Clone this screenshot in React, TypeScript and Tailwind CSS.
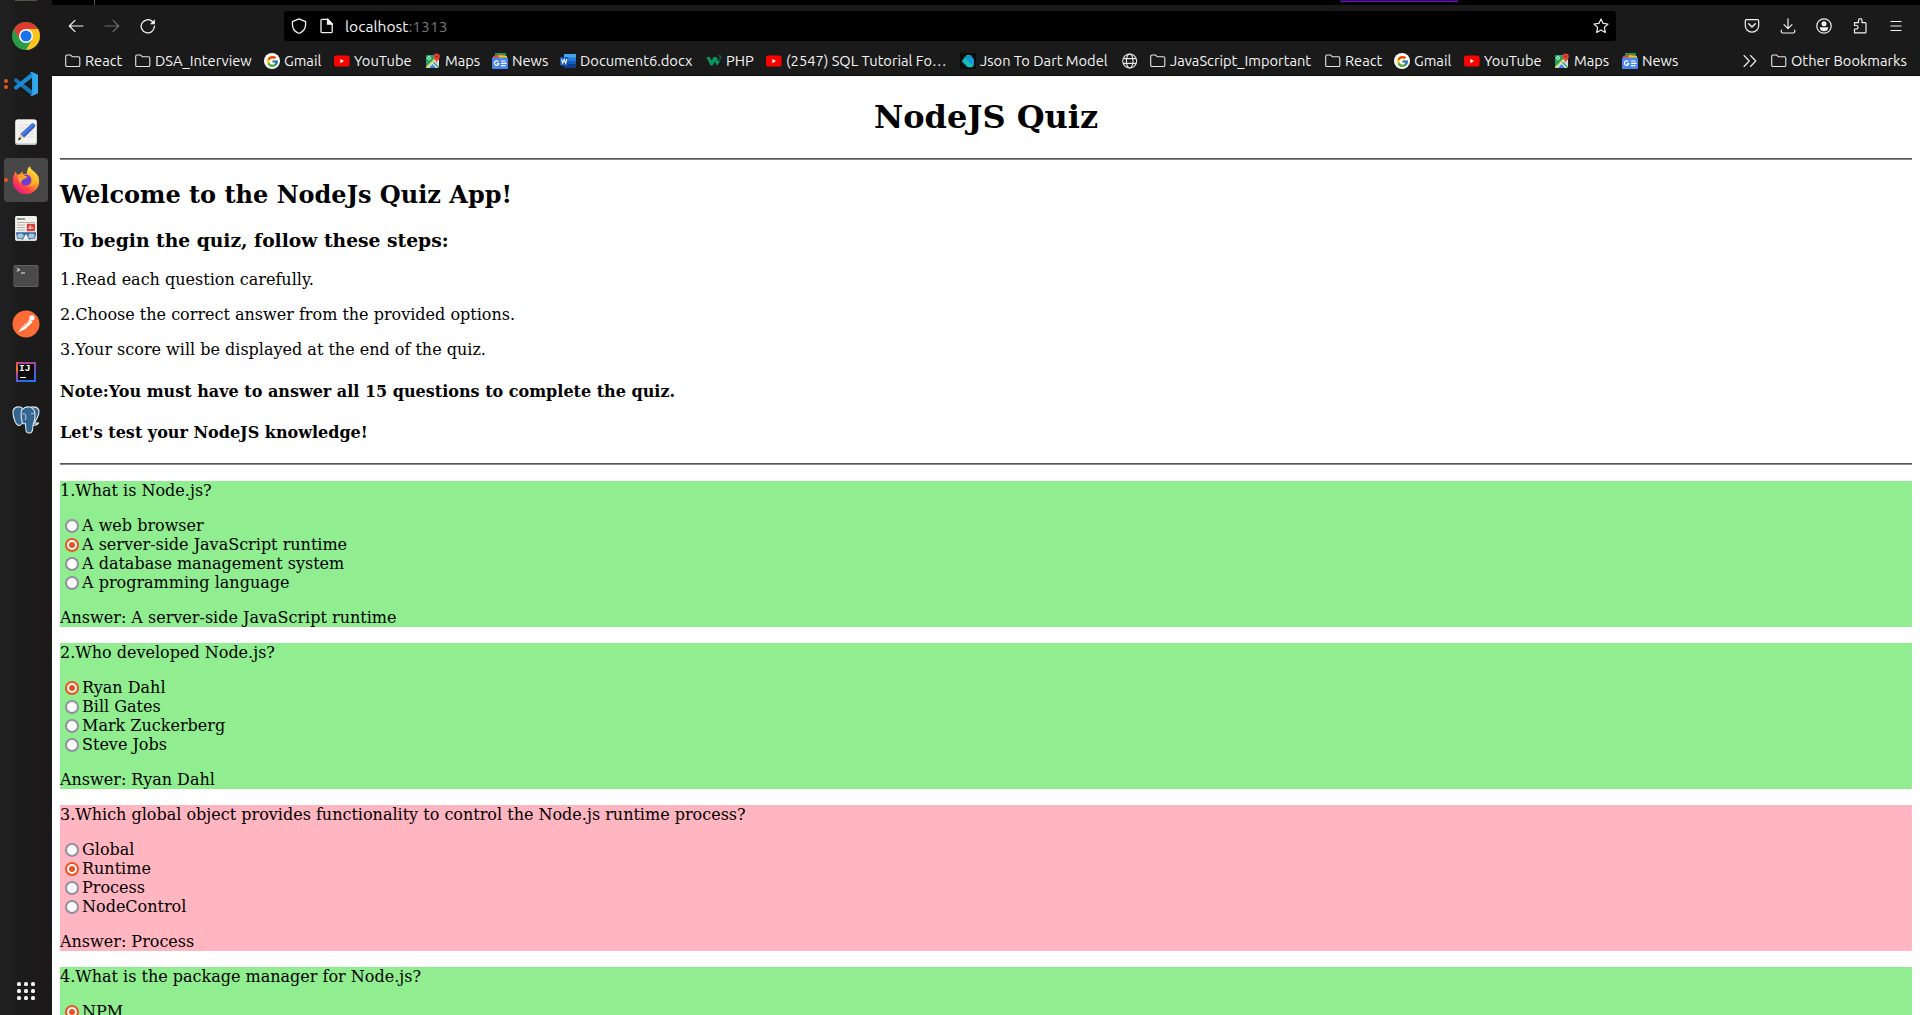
import React from "react";
import { FcGoogle } from "react-icons/fc";

type IconProps = { className?: string };

function FolderIcon() {
  return (
    <svg width="16" height="16" viewBox="0 0 16 16" fill="none" stroke="#e8e8ea" strokeWidth="1.1">
      <path d="M.7 12.2V3.3Q.7 2 2 2h3.6l1.8 1.8h6.1q1.3 0 1.3 1.3v7.1q0 1.3-1.3 1.3H2q-1.3 0-1.3-1.3Z" />
    </svg>
  );
}

function GoogleIcon() {
  return (
    <span className="flex size-4 items-center justify-center rounded-full bg-white">
      <FcGoogle size={13} />
    </span>
  );
}

function YouTubeIcon() {
  return (
    <svg width="16" height="16" viewBox="0 0 16 16">
      <rect x="0" y="2.4" width="15.6" height="11.2" rx="2.6" fill="#f00" />
      <path d="M6.3 5.9v4.3L10 8Z" fill="#fff" />
    </svg>
  );
}

function MapsIcon() {
  return (
    <svg width="16" height="16" viewBox="0 0 16 16">
      <rect x="1" y="2" width="13" height="13" rx="1" fill="#1fa463" />
      <path d="m1 14 9-9 2 1-10 9H1Z" fill="#ffd84d" />
      <path d="M14 7v7L8 8l3-2Z" fill="#d5d9df" />
      <path d="m7.5 9.2 5.6 5.8H2.4Z" fill="#e9eaed" />
      <path d="m4 15 3.5-4 3.4 4Z" fill="#4285f4" />
      <circle cx="4" cy="5" r="1.5" fill="none" stroke="#fff" strokeWidth=".8" />
      <path d="M11.6 10.4C11.5 7.2 8.4 6.5 8.4 3.6a3.2 3.2 0 0 1 6.4 0c0 2.9-3.1 3.6-3.2 6.8Z" fill="#ea4335" />
      <circle cx="11.6" cy="3.5" r="1.1" fill="#89251f" />
    </svg>
  );
}

function NewsIcon() {
  return (
    <svg width="16" height="16" viewBox="0 0 16 16">
      <path d="M3 0h11v6H3Z" fill="#0c9d58" />
      <path d="m1 3 10-2 2 5H1Z" fill="#ea4335" />
      <path d="m7 2 8 1v4H6Z" fill="#ffc107" />
      <rect x="0" y="4.5" width="16" height="11.5" rx="1" fill="#4a86f0" />
      <path d="M6.3 8.7a2.2 2.2 0 1 0 .5 2H5" fill="none" stroke="#fff" strokeWidth="1.2" />
      <path d="M9 8h4.5M9 10.3h5.5M9 12.6h4.5" stroke="#fff" strokeWidth="1.2" />
    </svg>
  );
}

function WordIcon() {
  return (
    <svg width="16" height="16" viewBox="0 0 16 16">
      <path d="M4 1h12v4H4Z" fill="#41a5ee" />
      <path d="M4 4.5h12V8H4Z" fill="#2b7cd3" />
      <path d="M4 8h12v3.5H4Z" fill="#185abd" />
      <path d="M4 11.5h12V15H4Z" fill="#103f91" />
      <rect y="4" width="8.4" height="8.4" rx=".8" fill="#185abd" />
      <path d="m1.5 6 1.2 4.3L4.2 6.4l1.4 3.9L6.9 6" fill="none" stroke="#fff" strokeWidth="1.1" />
    </svg>
  );
}

function W3Icon() {
  return (
    <svg width="16" height="16" viewBox="0 0 16 16">
      <path d="M.3 4h3.400l2 4L7.600 4h3l1.400 4.300L13.300 7l.200 2.200-2.500 3.300L8.900 8.500l-2.300 4h-2Z" fill="#059862" />
      <path d="M12.600 2.800h2l-1 1.300q1.600.2 1 1.500-.6.8-2 .3" fill="none" stroke="#059862" strokeWidth=".8" />
    </svg>
  );
}

function DartIcon() {
  return (
    <svg width="16" height="16" viewBox="0 0 16 16">
      <rect width="16" height="16" fill="#0d0d0d" />
      <path d="M2 8 7 2l4 .5 3 4v6l-2 1.5H7L2.5 9.5Z" fill="#0d6fc4" />
      <path d="M2 8 7 2l4 .5 1 1H4.500v7Z" fill="#16c1ad" />
      <path d="M5 4h7l2 2.500v6Z" fill="#1696dc" />
      <path d="m4.500 10.500 3.800 3.800H12l1.500-1.500L4.500 4Z" fill="#16c1ad" />
    </svg>
  );
}

function GlobeIcon() {
  return (
    <svg width="16" height="16" viewBox="0 0 16 16" fill="none" stroke="#e8e8ea" strokeWidth="1.1">
      <circle cx="7.700" cy="8" r="7" />
      <ellipse cx="7.700" cy="8" rx="3.300" ry="7" />
      <path d="M1.400 5.600H14M1.400 10.400H14" />
    </svg>
  );
}

const bookmarks = [
  { icon: FolderIcon, label: "React", box: "w-[70px]" },
  { icon: FolderIcon, label: "DSA_Interview", box: "w-[129px]" },
  { icon: GoogleIcon, label: "Gmail", box: "w-[70px]" },
  { icon: YouTubeIcon, label: "YouTube", box: "w-[91px]" },
  { icon: MapsIcon, label: "Maps", box: "w-[67px]" },
  { icon: NewsIcon, label: "News", box: "w-[68px]" },
  { icon: WordIcon, label: "Document6.docx", box: "w-[146px]" },
  { icon: W3Icon, label: "PHP", box: "w-[60px]" },
  { icon: YouTubeIcon, label: "(2547) SQL Tutorial Fo…", box: "w-[194px]" },
  { icon: DartIcon, label: "Json To Dart Model", box: "w-[162px]" },
  { icon: GlobeIcon, label: "", box: "w-[28px]" },
  { icon: FolderIcon, label: "JavaScript_Important", box: "w-[175px]" },
  { icon: FolderIcon, label: "React", box: "w-[69px]" },
  { icon: GoogleIcon, label: "Gmail", box: "w-[70px]" },
  { icon: YouTubeIcon, label: "YouTube", box: "w-[90px]" },
  { icon: MapsIcon, label: "Maps", box: "w-[68px]" },
  { icon: NewsIcon, label: "News", box: "w-[60px]" },
];

function BrowserBar() {
  return (
    <header className="h-[76px] shrink-0 border-b border-[#0c0c0d] bg-[#1a1a1a] font-['Ubuntu','Noto_Sans',sans-serif] text-[#f4f4f5]">
      <div className="flex h-[5px] bg-black">
        <div className="ml-[42px] w-px bg-[#55555a]" />
        <div className="ml-[1245px] h-[2px] w-[118px] rounded-b-sm border-x border-b border-[#8000ff] bg-[#1a1a1a]" />
      </div>
      <div className="flex h-[42px] items-center">
        <svg className="ml-[16px]" width="16" height="16" viewBox="0 0 16 16" fill="none" stroke="#f2f2f4" strokeWidth="1.2" strokeLinecap="round" strokeLinejoin="round">
          <path d="M15 8H1.3M7 2.3 1.3 8 7 13.7" />
        </svg>
        <svg className="ml-[20px]" width="16" height="16" viewBox="0 0 16 16" fill="none" stroke="#6c6c6f" strokeWidth="1.2" strokeLinecap="round" strokeLinejoin="round">
          <path d="M1 8h13.7M9 2.3 14.7 8 9 13.7" />
        </svg>
        <svg className="ml-[20px]" width="16" height="16" viewBox="0 0 16 16" fill="none" stroke="#f2f2f4" strokeWidth="1.3" strokeLinecap="round">
          <path d="M14.4 8.2A6.6 6.6 0 1 1 12.6 3.8" />
          <path d="M14.9 1.3v5h-5Z" fill="#f2f2f4" stroke="none" />
        </svg>
        <div className="ml-[128px] flex h-[30px] w-[1332px] items-center rounded-[3px] bg-black">
          <svg className="ml-[7px]" width="16" height="16" viewBox="0 0 16 16" fill="none" stroke="#f2f2f4" strokeWidth="1.3" strokeLinejoin="round">
            <path d="m8 .8 6.6 2.8v2.6c0 4-2.6 7.2-5.4 8.7q-1.2.6-2.4 0C4 13.400 1.400 10.200 1.400 6.200V3.600Z" />
          </svg>
          <svg className="ml-[12px]" width="16" height="16" viewBox="0 0 16 16" fill="none" stroke="#f2f2f4" strokeWidth="1.3" strokeLinejoin="round">
            <path d="M2 13.500v-11Q2 1.300 3.200 1.300h5.300l4.700 4.700v7.500q0 1.200-1.200 1.200H3.200Q2 14.700 2 13.500Z" />
            <path d="M8.500 1v5.200h5Z" fill="#f2f2f4" />
          </svg>
          <div className="ml-[10px] text-[15.6px] leading-5">
            localhost<span className="text-[#77777a]">:1313</span>
          </div>
          <svg className="ml-auto mr-[7px]" width="16" height="16" viewBox="0 0 16 16" fill="none" stroke="#f2f2f4" strokeWidth="1.2" strokeLinejoin="round">
            <path d="m8 .9 2.100 4.500 4.900.6-3.600 3.400.9 5L8 12l-4.300 2.400.9-5L1 6l4.900-.6Z" />
          </svg>
        </div>
        <div className="ml-auto mr-[16px] flex items-center gap-[20px]">
          <svg width="16" height="16" viewBox="0 0 16 16" fill="none" stroke="#f2f2f4" strokeWidth="1.2" strokeLinecap="round" strokeLinejoin="round">
            <path d="M2.500 1.700h11q1.200 0 1.200 1.200v4.600a6.700 6.700 0 0 1-13.400 0V2.900q0-1.200 1.200-1.200Z" />
            <path d="m4.700 5.800 3.300 3.200 3.300-3.200" strokeWidth="1.500" />
          </svg>
          <svg width="16" height="16" viewBox="0 0 16 16" fill="none" stroke="#f2f2f4" strokeWidth="1.2" strokeLinecap="round" strokeLinejoin="round">
            <path d="M8 .8v9.700M4 6.700l4 4 4-4M1.300 12v1.500q0 1.500 1.500 1.500h10.400q1.500 0 1.500-1.500V12" />
          </svg>
          <svg width="16" height="16" viewBox="0 0 16 16" fill="none" stroke="#f2f2f4" strokeWidth="1.2">
            <circle cx="8" cy="8" r="7.200" />
            <circle cx="8" cy="5.700" r="2.500" fill="#f2f2f4" stroke="none" />
            <path d="M3.800 9.200h8.400q0 4-4.200 4t-4.200-4Z" fill="#f2f2f4" stroke="none" />
          </svg>
          <svg width="16" height="16" viewBox="0 0 16 16" fill="none" stroke="#f2f2f4" strokeWidth="1.2" strokeLinejoin="round">
            <path d="M2.500 14.900V11h1.800a1.700 1.700 0 0 0 0-3.500H2.500V4.600h4V2.400a1.700 1.700 0 0 1 3.500 0v2.200h3.100q.9 0 .9.900v8.500q0 .9-.9.900Z" />
          </svg>
          <svg width="16" height="16" viewBox="0 0 16 16" stroke="#f2f2f4" strokeWidth="1.200">
            <path d="M2.500 3.500h11M2.500 8h11M2.500 12.500h11" />
          </svg>
        </div>
      </div>
      <nav className="flex h-[28px] items-center pl-[13px] text-[14.67px] leading-5">
        {bookmarks.map(({ icon: Icon, label, box }, i) => (
          <div key={i} className={`flex shrink-0 items-center gap-[4px] whitespace-nowrap ${box}`}>
            <span className="shrink-0">
              <Icon />
            </span>
            <span>{label}</span>
          </div>
        ))}
        <svg className="ml-[60px] shrink-0" width="16" height="16" viewBox="0 0 16 16" fill="none" stroke="#f2f2f4" strokeWidth="1.1" strokeLinecap="round" strokeLinejoin="round">
          <path d="m2 2.500 5.300 5.500L2 13.500M8.500 2.500 13.800 8l-5.300 5.500" />
        </svg>
        <div className="ml-[13px] flex shrink-0 items-center gap-[4px] whitespace-nowrap">
          <FolderIcon />
          <span>Other Bookmarks</span>
        </div>
      </nav>
    </header>
  );
}

function ChromeLogo({ className }: IconProps) {
  return (
    <svg className={className} width="28" height="28" viewBox="0 0 28 28">
      <circle cx="14" cy="14" r="14" fill="#2c9b48" />
      <path d="M14 14 1.900 7A14 14 0 0 1 26.100 7Z" fill="#e03b2f" />
      <path d="M14 7h12.100A14 14 0 0 1 14 28l6-10.500Z" fill="#fcc31e" />
      <path d="M1.900 7 8 17.500 14 14V7Z" fill="#e03b2f" />
      <circle cx="14" cy="14" r="7" fill="#fff" />
      <circle cx="14" cy="14" r="5.500" fill="#1a73e8" />
    </svg>
  );
}

function VsCodeLogo() {
  return (
    <svg width="26" height="26" viewBox="0 0 26 26">
      <path d="M1.200 8.500 3 7l16.500 12.800V25L1.200 10.300Z" fill="#1478b8" />
      <path d="M1.200 17.500 3 19 19.500 6.500V1L1.200 15.700Z" fill="#1d8bd1" />
      <path d="m18.500.8 6.500 3v18.400l-6.500 3q-.8 0-1.200-.6l1.800-1V2.400l-1.800-1q.4-.6 1.200-.6Z" fill="#2fa8ee" />
    </svg>
  );
}

function EditorLogo() {
  return (
    <svg width="24" height="28" viewBox="0 0 24 28">
      <rect x="1" y="1.500" width="22" height="25.500" rx="2.500" fill="#b9b9b7" />
      <rect x="1.600" y="1.500" width="20.800" height="24" rx="2" fill="#f3f3f1" />
      <path d="M4 7h16M4 10h16M4 13h16M4 16h16M4 19h16" stroke="#d5d5d3" strokeWidth=".7" />
      <path d="m4 22.500 2.500-6.500 3.700 3.500Z" fill="#e9c6a0" />
      <path d="m4 22.500 1.200-3.200 2 1.800Z" fill="#222" />
      <path d="M6.500 16 17.800 5.500q1.500-.8 2.800.8 1.200 1.500.3 2.700L10.200 19.500Z" fill="#2f62c9" />
      <path d="m8 17 11.500-10.500" stroke="#5c8df0" strokeWidth="1.200" />
    </svg>
  );
}

function FirefoxLogo() {
  return (
    <svg width="28" height="28" viewBox="0 0 28 28">
      <defs>
        <linearGradient id="ffBody" x1=".85" y1=".1" x2=".2" y2=".95">
          <stop offset="0" stopColor="#fff044" />
          <stop offset=".4" stopColor="#ff9a24" />
          <stop offset=".7" stopColor="#ff4545" />
          <stop offset="1" stopColor="#e9168c" />
        </linearGradient>
      </defs>
      <path d="M3.500 5.500 5.500 9l3-1.500L10.800 5v3.200L15 7.500Q14.600 3 18 .300q.4 3.200 3.600 5 5.600 4 5.600 9.700A13.200 13.200 0 0 1 .800 15q0-5.500 2.700-9.500Z" fill="url(#ffBody)" />
      <circle cx="13.800" cy="14" r="5.500" fill="#6b3fd1" />
      <path d="M5.500 9.500q4-2.500 7.500.2l2.600.9q-1 2.100-3.600 2.400l-2.200 1.600q-1.800 2 .8 3.600-4-.8-5.100-8.700Z" fill="#ffa030" />
      <path d="M14.800 7q5.500.9 6 6.500.2 5-5.300 6.500 9-.2 8.500-7.500Q22.500 7.500 18 6Z" fill="#ffc02c" opacity=".8" />
    </svg>
  );
}

function ReaderLogo() {
  return (
    <svg width="24" height="28" viewBox="0 0 24 28">
      <rect x="1" y="2" width="22" height="25" rx="2" fill="#d8d8d5" />
      <rect x="1.500" y="2" width="21" height="23.500" rx="1.500" fill="#f0f0ed" />
      <path d="M3 5h8" stroke="#555" strokeWidth="1.200" />
      <path d="M3 8.500h18M3 11h8M3 13.500h8M3 16h8" stroke="#b0aaa0" strokeWidth=".9" />
      <rect x="12.800" y="9.800" width="8.200" height="7.400" fill="#dc3c34" />
      <path d="M14.500 14.800q2-4 2.500-3t-1.500 2.200 4-.200" fill="none" stroke="#fff" strokeWidth=".8" />
      <path d="M2 18.300h20v2l-1 4.200-6 1-2.500-5h-1L9 25.500l-6-1Z" fill="#34659c" />
      <ellipse cx="6.500" cy="22" rx="3.200" ry="2.400" fill="#a8c7dd" />
      <ellipse cx="17.500" cy="22" rx="3.200" ry="2.400" fill="#a8c7dd" />
    </svg>
  );
}

function TerminalLogo() {
  return (
    <svg width="26" height="24" viewBox="0 0 26 24">
      <rect x=".5" y="1" width="25" height="22" rx="2" fill="#626262" />
      <rect x="1.200" y="2" width="23.600" height="20" rx="1.500" fill="#4a4a4a" />
      <path d="m3.800 4.300 3 1.500-3 1.500M8 9h4" fill="none" stroke="#eee" strokeWidth="1" />
    </svg>
  );
}

function PostmanLogo() {
  return (
    <svg width="28" height="28" viewBox="0 0 28 28">
      <circle cx="14" cy="14" r="13.500" fill="#ff6c37" />
      <circle cx="20" cy="7.800" r="2.600" fill="#fff" />
      <path d="m17.500 9 3 3-7 7-3.800.800Z" fill="#fff" />
      <path d="m13.500 13-4.500 5.300-2.800 4.200 4-2 3.800-2Z" fill="#fff" />
      <path d="m10.500 17.500 7-6.500" stroke="#ff6c37" strokeWidth=".8" />
    </svg>
  );
}

function IntelliJLogo() {
  return (
    <div className="flex size-5 items-center justify-center bg-[conic-gradient(#c93a86,#5b5bd0_25%,#087cfa_45%,#3d66dd_60%,#b0489c_70%,#fc801d_80%,#d43d80_90%,#8a4bc0)]">
      <div className="flex h-4 w-4 flex-col bg-[#0b0b0b] pl-[1px]">
        <span className="font-['Liberation_Mono',monospace] text-[9.500px] leading-[10px] font-bold text-white">IJ</span>
        <span className="mt-[3px] ml-px h-px w-[6px] bg-white" />
      </div>
    </div>
  );
}

function PostgresLogo() {
  return (
    <svg width="28" height="28" viewBox="0 0 28 28" stroke="#dfe6ec" strokeWidth="1.100" strokeLinejoin="round">
      <path d="M9.500 1.300Q3-.200 1.200 4.200q-.9 4 1.800 11 2 4.600 4.500 4.200 1.500-.2 3-2.400l5-.5Z" fill="#336791" />
      <path d="M18.500 1.300q6-1.500 8.300 2.600 1 4-3.200 11l-1.200 2q2.600.6 4.300-.200-1.500 2.800-5.400 2.600l-4-2Z" fill="#336791" />
      <path d="M9.500 4.500q3-4.300 8.500-3.500 5 1.200 5 8.500 0 4-1.200 7-1 1.500-1 4.500 0 6-3.300 6-3.500.5-3.700-4.500l-.4-5q-3 1-3.400-2Q8.500 9 9.500 4.500Z" fill="#336791" />
      <path d="M10.500 8q2-1 3 .500 1 2.500-.200 5.500M19 7.800q1.500-.700 2.800 0" fill="none" strokeWidth=".8" />
    </svg>
  );
}

const dockApps = [
  { id: "chrome", icon: ChromeLogo, dots: 0 },
  { id: "vscode", icon: VsCodeLogo, dots: 2 },
  { id: "editor", icon: EditorLogo, dots: 0 },
  { id: "firefox", icon: FirefoxLogo, dots: 1 },
  { id: "reader", icon: ReaderLogo, dots: 0 },
  { id: "terminal", icon: TerminalLogo, dots: 0 },
  { id: "postman", icon: PostmanLogo, dots: 0 },
  { id: "intellij", icon: IntelliJLogo, dots: 0 },
  { id: "postgres", icon: PostgresLogo, dots: 0 },
];

function Dock() {
  return (
    <aside className="flex h-full w-[52px] shrink-0 flex-col items-center bg-[linear-gradient(90deg,#202122,#1c1b1c_40%,#1b191a)]">
      <div className="h-px w-[22px] bg-[#56543f]" />
      <div className="mt-[13px] flex flex-col gap-[4px]">
        {dockApps.map(({ id, icon: Icon, dots }) => (
          <div
            key={id}
            className={`relative flex size-[44px] items-center justify-center rounded-[4px] ${id === "firefox" ? "bg-[#474747]" : ""}`}
          >
            <div className="absolute top-0 left-0 flex h-full flex-col justify-center gap-[2px]">
              {Array.from({ length: dots }, (_, i) => (
                <span key={i} className="size-[4px] rounded-full bg-[#e95420]" />
              ))}
            </div>
            <Icon />
          </div>
        ))}
      </div>
      <div className="mt-auto mb-[15px] grid grid-cols-3 gap-[3px]">
        {Array.from({ length: 9 }, (_, i) => (
          <span key={i} className="size-[4px] rounded-[1.500px] bg-[#f2f2f2]" />
        ))}
      </div>
    </aside>
  );
}

const questions = [
  {
    title: "1.What is Node.js?",
    options: ["A web browser", "A server-side JavaScript runtime", "A database management system", "A programming language"],
    chosen: 1,
    answer: "A server-side JavaScript runtime",
  },
  {
    title: "2.Who developed Node.js?",
    options: ["Ryan Dahl", "Bill Gates", "Mark Zuckerberg", "Steve Jobs"],
    chosen: 0,
    answer: "Ryan Dahl",
  },
  {
    title: "3.Which global object provides functionality to control the Node.js runtime process?",
    options: ["Global", "Runtime", "Process", "NodeControl"],
    chosen: 1,
    answer: "Process",
  },
  { title: "4.What is the package manager for Node.js?", options: ["NPM"], chosen: 0, answer: "NPM" },
];

function Radio({ checked }: { checked: boolean }) {
  return checked ? (
    <span className="mr-[3px] ml-[5px] flex size-[14px] items-center justify-center rounded-full border-2 border-[#e95420] bg-white">
      <span className="size-[6px] rounded-full bg-[#e95420]" />
    </span>
  ) : (
    <span className="mr-[3px] ml-[5px] size-[14px] rounded-full border-2 border-[#8f8f9d] bg-white" />
  );
}

function Rule() {
  return <div className="h-[2px] border-t border-[#555] bg-[#888]" />;
}

export default function App() {
  return (
    <div className="flex h-[1015px] w-[1920px] overflow-hidden bg-white">
      <Dock />
      <div className="flex min-w-0 flex-1 flex-col">
        <BrowserBar />
        <main className="min-h-0 flex-1 overflow-hidden px-2 font-['DejaVu_Serif',serif] text-[16px] leading-[19px] text-black">
          <h1 className="mt-[22px] mb-[22px] text-center text-[32px] leading-[38px] font-bold">NodeJS Quiz</h1>
          <Rule />
          <h2 className="mt-[21px] text-[24px] leading-[28px] font-bold">Welcome to the NodeJs Quiz App!</h2>
          <h3 className="mt-[20px] text-[18.72px] leading-[22px] font-bold">To begin the quiz, follow these steps:</h3>
          <p className="mt-[19px]">1.Read each question carefully.</p>
          <p className="mt-4">2.Choose the correct answer from the provided options.</p>
          <p className="mt-4">3.Your score will be displayed at the end of the quiz.</p>
          <h4 className="mt-[23px] font-bold">Note:You must have to answer all 15 questions to complete the quiz.</h4>
          <h4 className="mt-[22px] mb-[21px] font-bold">Let's test your NodeJS knowledge!</h4>
          <Rule />
          {questions.map((q) => (
            <section key={q.title} className={`mt-4 ${q.options[q.chosen] === q.answer ? "bg-[#90ee90]" : "bg-[#ffb6c1]"}`}>
              <p className="mb-4">{q.title}</p>
              {q.options.map((option, i) => (
                <div key={option} className="flex items-center">
                  <Radio checked={i === q.chosen} />
                  <span>{option}</span>
                </div>
              ))}
              <p className="mt-4">Answer: {q.answer}</p>
            </section>
          ))}
        </main>
      </div>
    </div>
  );
}
